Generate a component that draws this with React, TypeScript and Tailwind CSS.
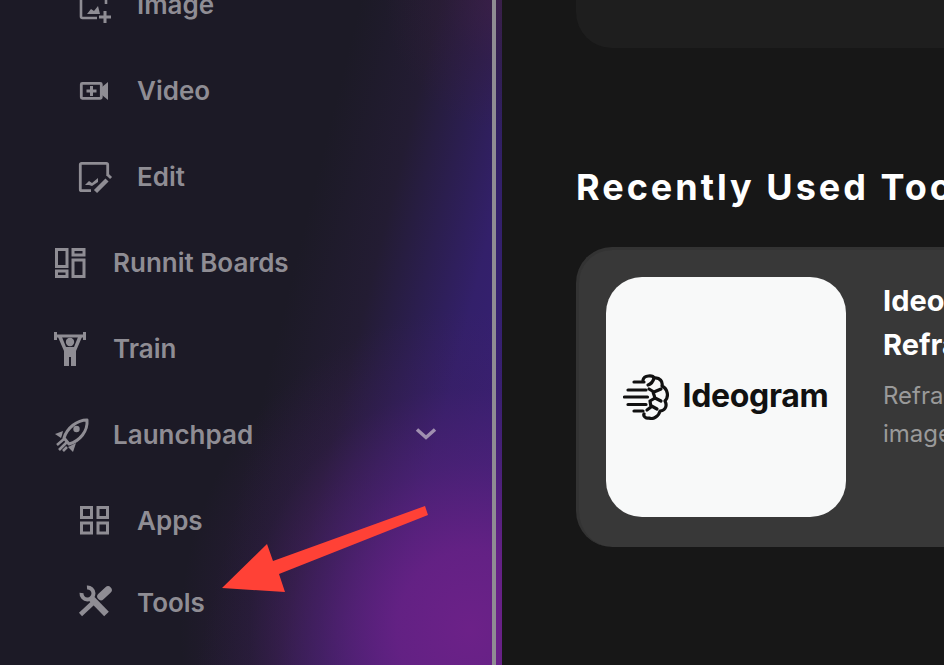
import React from "react";

const G = "#8f8d94";

const Ico = ({ children }: { children: React.ReactNode }) => (
  <svg viewBox="0 0 36 36" className="h-9 w-9 overflow-visible" fill="none" stroke={G} strokeWidth="2.6">{children}</svg>
);

const ImageIcon = () => (
  <Ico>
    <path d="M28 18V6.500A1.500 1.500 0 0 0 26.500 5H4.500A1.500 1.500 0 0 0 3 6.500V30.500A1.500 1.500 0 0 0 4.500 32H19" />
    <polygon points="9,28 13,23 16,25 20,20 22,28" fill={G} stroke="none" />
    <path d="M21 31h12M27 25v12" strokeWidth="3" />
  </Ico>
);

const VideoIcon = () => (
  <Ico>
    <rect x="3.300" y="11.300" width="20" height="15" rx="1" strokeWidth="2.800" />
    <polygon points="24,15 30,10 30,28 24,23" fill={G} stroke="none" />
    <path d="M8.500 19h10M13.500 14v10" strokeWidth="3" />
  </Ico>
);

const EditIcon = () => (
  <Ico>
    <path d="M29.700 18V6.500a1.200 1.200 0 0 0-1.200-1.200H3.500a1.200 1.200 0 0 0-1.200 1.200V31.500a1.200 1.200 0 0 0 1.200 1.200H13" strokeWidth="2.800" />
    <polygon points="7,27 11,23 14,25 20,20 20,24 14,28 11,27" fill={G} stroke="none" />
    <path d="M17.500 33.500L29 22" strokeWidth="4.500" />
    <path d="M30.500 19.500L32.500 17.500" strokeWidth="4.500" />
  </Ico>
);

const BoardsIcon = () => (
  <Ico>
    <g strokeWidth="3">
      <rect x="3.500" y="5.500" width="10.500" height="17" />
      <rect x="3.500" y="27" width="10.500" height="5.500" />
      <rect x="20" y="5.500" width="11" height="5.500" />
      <rect x="20" y="16" width="11" height="16.500" />
    </g>
  </Ico>
);

const TrainIcon = () => (
  <Ico>
    <g fill={G} stroke="none">
      <rect x="1" y="2" width="3" height="8" />
      <rect x="30" y="2" width="3" height="8" />
      <rect x="4" y="4.500" width="26" height="3" />
      <circle cx="17" cy="12" r="4.200" />
      <polygon points="5,7 9,7 13,17 21,17 25,7 29,7 23,21 23,36 18,36 18,27 16,27 16,36 11,36 11,21" />
    </g>
  </Ico>
);

const RocketIcon = () => (
  <Ico>
    <path d="M34 4C24 4 14 12 11 22L16 28C27 25 35 15 34 4Z" strokeLinejoin="round" strokeWidth="3" />
    <circle cx="23.500" cy="13" r="3.200" fill={G} stroke="none" />
    <polygon points="10,15 2,18 8,22 9,19" fill={G} stroke="none" />
    <polygon points="23,27 20,36 15,31 19,29" fill={G} stroke="none" />
    <path d="M4 29l7-6M6 34l8-8M10 35l4-4" strokeWidth="2.600" />
  </Ico>
);

const AppsIcon = () => (
  <Ico>
    <g strokeWidth="3">
      <rect x="3.500" y="5.500" width="10" height="10" />
      <rect x="20" y="5.500" width="9.500" height="10" />
      <rect x="3.500" y="21" width="10" height="10" />
      <rect x="20" y="21" width="9.500" height="10" />
    </g>
  </Ico>
);

const ToolsIcon = () => (
  <Ico>
    <path d="M2.500 30.500L18 16" strokeWidth="4.500" />
    <path d="M23 12.500L30 6" strokeWidth="7.500" strokeLinecap="round" />
    <path d="M9 3.500A6 6 0 1 1 3.500 9" strokeWidth="4" />
    <path d="M12 13L28.500 30" strokeWidth="6.500" />
  </Ico>
);

const ChevronIcon = () => (
  <svg viewBox="0 0 24 14" className="mr-[54px] ml-auto h-[14px] w-[24px]" fill="none" stroke="#a090b0" strokeWidth="3.500">
    <path d="M3 2.500L12 10.500L21 2.500" />
  </svg>
);

const BrainLogo = () => (
  <svg viewBox="0 0 46 46" className="h-[46px] w-[46px] shrink-0" fill="none" stroke="#111" strokeWidth="3.200" strokeLinecap="round" strokeLinejoin="round">
    <path d="M11 8h10M5 16h18M1.500 23h23M5 30.500h18M11 37h9" />
    <path d="M20 6C21 1 30 1 31 4C37 3 40 8 39 12C45 15 46 23 42 27C45 33 41 37 37 37C36 42 30 46 26 44C23 45 20 42 21 40" />
    <path d="M31 4C30 8 28 10 25 11M38 15L31 18L26 15M30 18L32 24L27 27M32 24L38 27M27 27L28 33L24 36M28.500 32L34 35" />
  </svg>
);

const Row = ({ icon, label, sub, extra, h }: { icon: React.ReactNode; label: string; sub?: boolean; extra?: React.ReactNode; h?: string }) => (
  <div className={`${h ?? "h-[86px]"} flex items-center ${sub ? "pl-[78px]" : "pl-[53px]"}`}>
    <div className="flex h-9 w-9 shrink-0 items-center justify-center">{icon}</div>
    <span className={`${sub ? "ml-[23px]" : "ml-[24px]"} text-[26px] font-semibold text-[#8f8d94]`}>{label}</span>
    {extra}
  </div>
);

export default function App() {
  return (
    <div className="relative flex h-[665px] w-[944px] overflow-hidden bg-[#171717] font-['Inter',sans-serif]">
      <aside className="flex h-full w-[502px] shrink-0 overflow-hidden bg-[radial-gradient(ellipse_290px_320px_at_470px_630px,rgba(108,33,136,1)_0%,rgba(104,33,134,0.9)_25%,rgba(88,33,122,0.55)_52%,rgba(70,30,100,0.22)_76%,rgba(60,28,90,0)_100%),radial-gradient(ellipse_120px_130px_at_505px_0px,rgba(72,32,64,0.5)_0%,rgba(60,30,60,0.25)_50%,rgba(50,28,50,0)_100%),linear-gradient(104deg,#1c1a26_0%,#1c1a26_54%,#231c33_66%,#33206a_82%,#3a2080_100%)]">
        <div className="w-[492px] shrink-0">
          <div className="-mt-[39px]">
            <Row sub icon={<ImageIcon />} label="Image" />
            <Row sub icon={<VideoIcon />} label="Video" />
            <Row sub icon={<EditIcon />} label="Edit" />
            <Row icon={<BoardsIcon />} label="Runnit Boards" />
            <Row icon={<TrainIcon />} label="Train" />
            <Row icon={<RocketIcon />} label="Launchpad" extra={<ChevronIcon />} />
            <Row sub icon={<AppsIcon />} label="Apps" />
            <Row sub h="h-[78px]" icon={<ToolsIcon />} label="Tools" />
          </div>
        </div>
        <div className="h-full w-[4px] shrink-0 bg-[#8f8c93]" />
      </aside>
      <main className="min-w-0 flex-1 overflow-hidden pl-[74px]">
        <div className="h-[48px] w-[500px] rounded-bl-[36px] bg-[#1e1e1e]" />
        <h2 className="mt-[116px] h-[46px] whitespace-nowrap text-[36px] leading-[46px] font-bold tracking-[3px] text-white">Recently Used Tools</h2>
        <div className="mt-[37px] flex h-[300px] w-[700px] rounded-[36px] border-t-[3px] border-l-[3px] border-[#333333] bg-[#383838] pt-[27px] pl-[27px]">
          <div className="flex h-[240px] w-[240px] shrink-0 items-center justify-center gap-[13px] rounded-[36px] bg-[#f8f9f9]">
            <BrainLogo />
            <span className="-mt-[2px] text-[32px] font-bold tracking-[-0.3px] text-[#111]">Ideogram</span>
          </div>
          <div className="ml-[37px] pt-[2px]">
            <div className="whitespace-nowrap text-[29px] leading-[44px] font-bold text-white">Ideogram 3.0</div>
            <div className="whitespace-nowrap text-[29px] leading-[44px] font-bold text-white">Reframe</div>
            <div className="mt-[10px] whitespace-nowrap text-[24px] leading-[38px] text-[#9a9a9a]">Reframe and extend</div>
            <div className="whitespace-nowrap text-[24px] leading-[38px] text-[#9a9a9a]">images with ease</div>
          </div>
        </div>
      </main>
      <svg className="absolute top-[500px] left-[215px] h-[100px] w-[220px]" viewBox="215 500 220 100">
        <polygon fill="#ff4136" points="425,506 428,515 279,574 285,592 222,588 267,544 273,561" />
      </svg>
    </div>
  );
}
